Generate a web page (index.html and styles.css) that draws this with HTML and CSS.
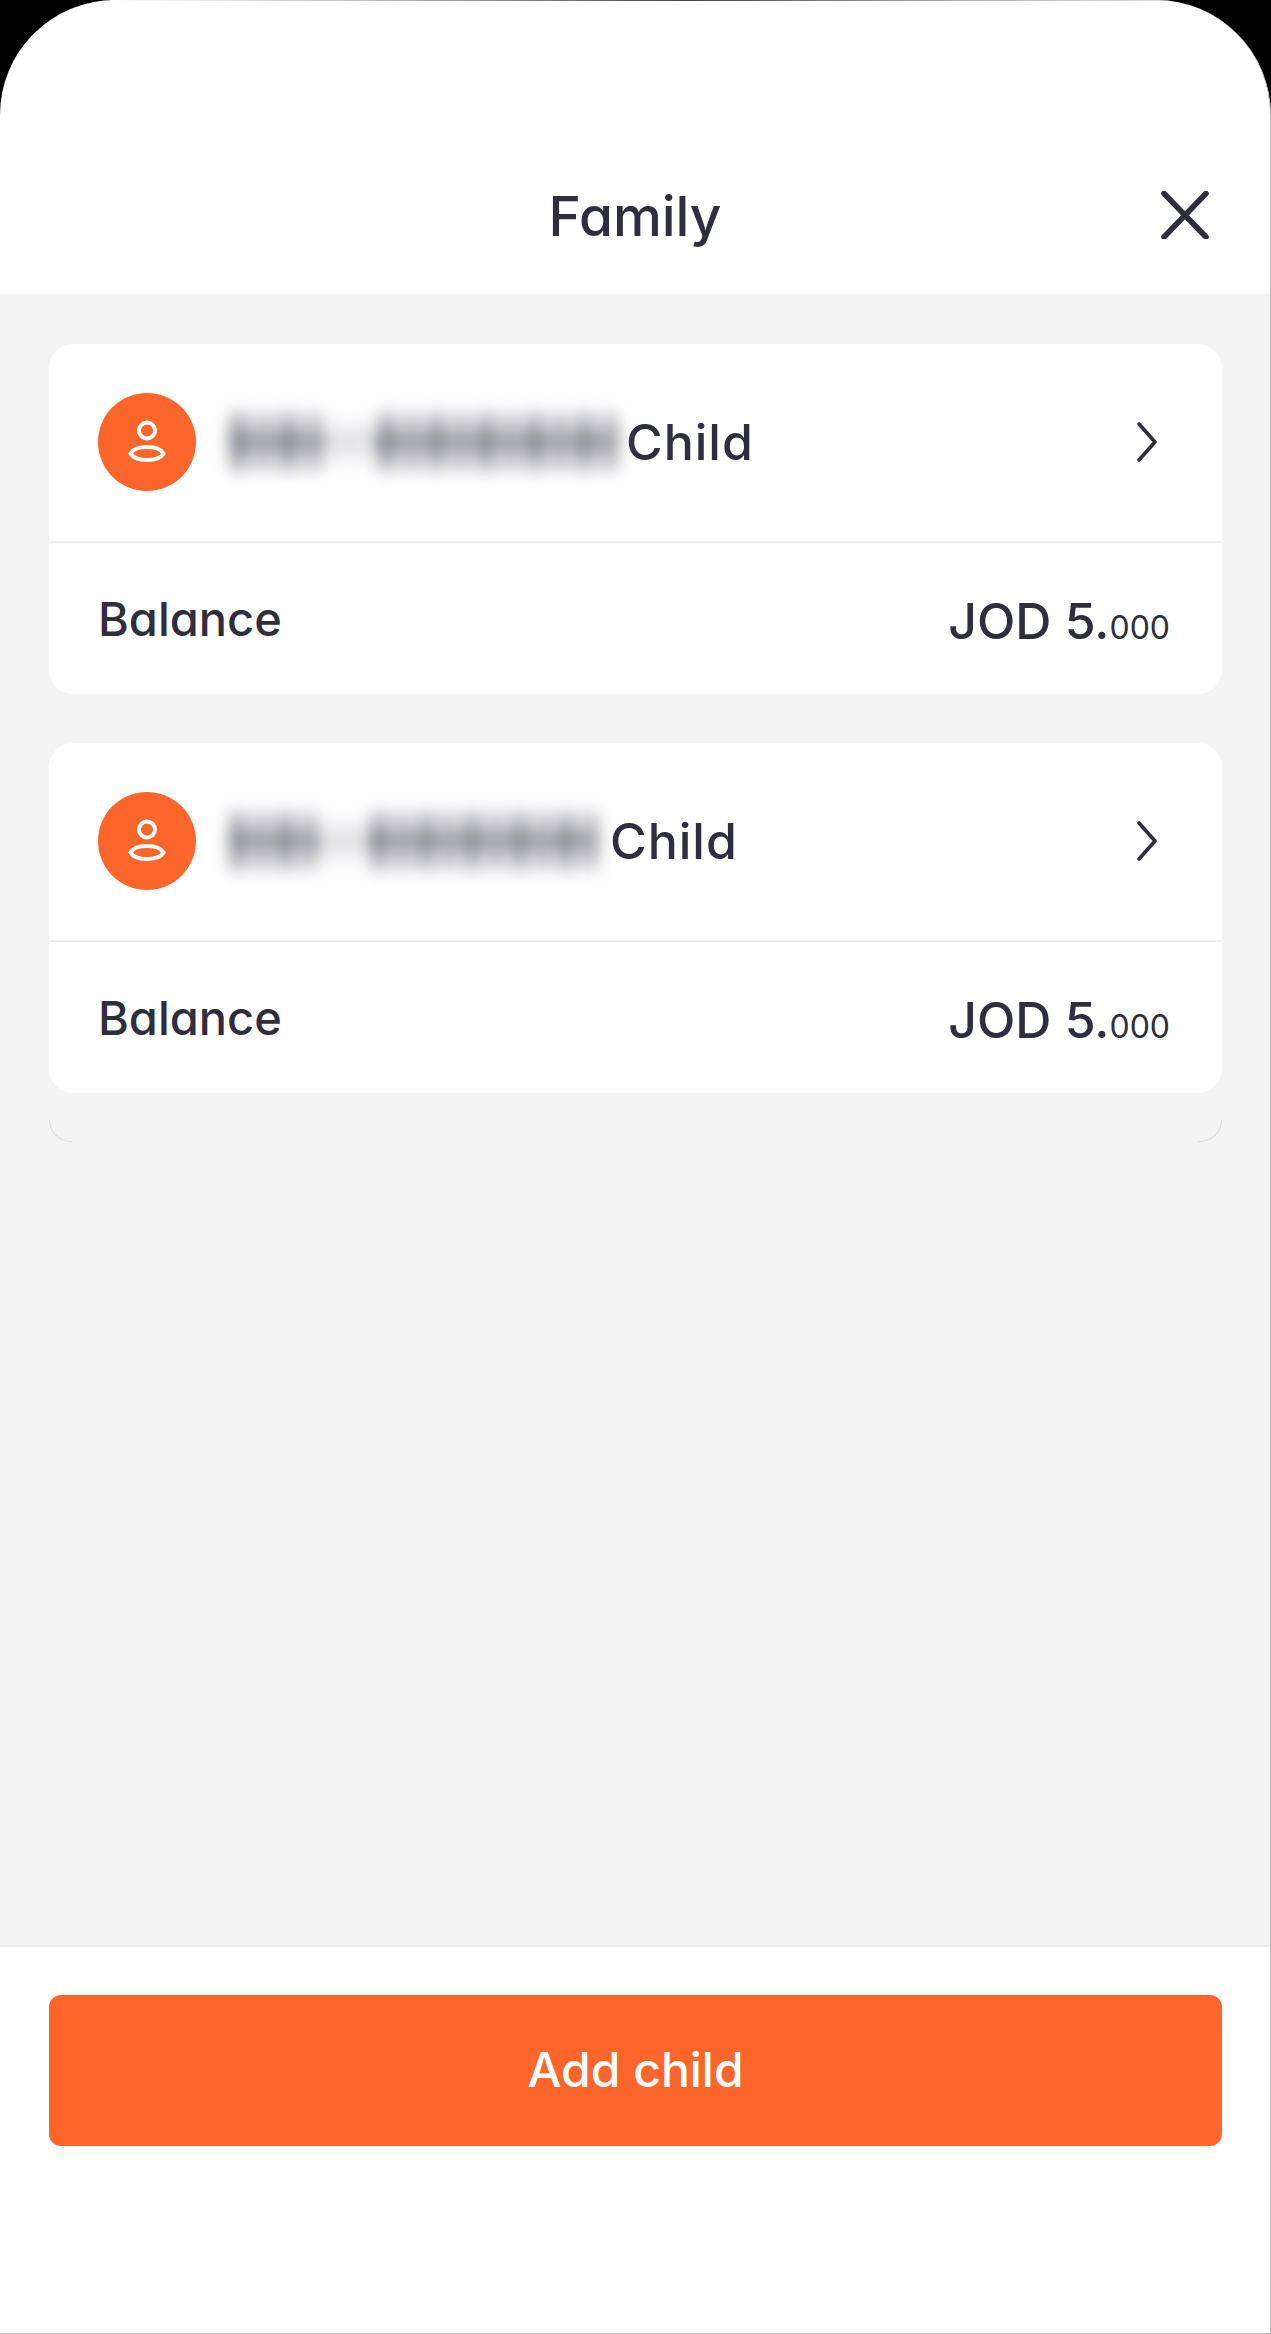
FILE: index.html
```html
<!DOCTYPE html>
<html lang="en">
<head>
    <meta charset="UTF-8">
    <meta name="viewport" content="width=device-width, initial-scale=1.0">
    <title>Family</title>
    <link rel="stylesheet" href="styles.css">
</head>
<body>
    <div class="screen">
        <header class="top-bar">
            <h1>Family</h1>
            <button class="close-btn" type="button" aria-label="Close">
                <svg width="48" height="48" viewBox="0 0 48 48" fill="none" stroke="#2e2e3d" stroke-width="5.6" stroke-linecap="round"><path d="M3 2.500 45 46M45 2.500 3 46"/></svg>
            </button>
        </header>

        <main class="family-list">
            <section class="card">
                <div class="card-top">
                    <span class="avatar">
                        <svg width="40" height="46" viewBox="0 0 40 46" fill="none" stroke="#fff" stroke-width="4"><circle cx="20" cy="11.500" r="8"/><path d="M3.500 34.500C6 30 13 28 20 28s14 2 16.500 6.500C34 39 27 41 20 41S6 39 3.500 34.500Z"/></svg>
                    </span>
                    <span class="blur-name blur-one"><i></i><i></i><i></i><i></i><i></i><i></i><i></i><i></i><i></i><i></i><i></i><i></i><i></i><i></i><i></i><i></i></span>
                    <span class="child-label">Child</span>
                    <svg class="chevron" width="22" height="40" viewBox="0 0 22 40" fill="none" stroke="#2e2e3d" stroke-width="3.600" stroke-linecap="round" stroke-linejoin="round"><path d="M3 2 19 20 3 38"/></svg>
                </div>
                <div class="card-bottom">
                    <span class="balance-label">Balance</span>
                    <span class="amount">JOD 5.<small>000</small></span>
                </div>
            </section>

            <section class="card">
                <div class="card-top">
                    <span class="avatar">
                        <svg width="40" height="46" viewBox="0 0 40 46" fill="none" stroke="#fff" stroke-width="4"><circle cx="20" cy="11.500" r="8"/><path d="M3.500 34.500C6 30 13 28 20 28s14 2 16.500 6.500C34 39 27 41 20 41S6 39 3.500 34.500Z"/></svg>
                    </span>
                    <span class="blur-name blur-two"><i></i><i></i><i></i><i></i><i></i><i></i><i></i><i></i><i></i><i></i><i></i><i></i><i></i><i></i><i></i><i></i></span>
                    <span class="child-label">Child</span>
                    <svg class="chevron" width="22" height="40" viewBox="0 0 22 40" fill="none" stroke="#2e2e3d" stroke-width="3.600" stroke-linecap="round" stroke-linejoin="round"><path d="M3 2 19 20 3 38"/></svg>
                </div>
                <div class="card-bottom">
                    <span class="balance-label">Balance</span>
                    <span class="amount">JOD 5.<small>000</small></span>
                </div>
            </section>

            <div class="card-edge"><span></span><span></span></div>
        </main>

        <footer class="bottom-bar">
            <button class="add-btn" type="button">Add child</button>
        </footer>
    </div>
</body>
</html>
```

FILE: styles.css
```css
* {
    box-sizing: border-box;
    margin: 0;
    padding: 0;
}

body {
    font-family: 'Inter', 'Lato', sans-serif;
    font-feature-settings: "cv11";
    background: #000;
    color: #2e2e3d;
    width: 1271px;
    height: 2334px;
    overflow: hidden;
}

.screen {
    position: relative;
    display: flex;
    flex-direction: column;
    height: 100%;
    background: #fff;
    border-radius: 115px 115px 0 0;
    border-right: 1px solid #bdbdbd;
    border-bottom: 1px solid #bdbdbd;
    overflow: hidden;
}

/* thin grey line along the top edge */
.screen::before {
    content: "";
    position: absolute;
    top: 0;
    left: 110px;
    right: 110px;
    height: 1px;
    background: linear-gradient(90deg, #fff, #bbb 25%, #444 55%, #aaa 80%, #ddd);
}

.top-bar {
    display: flex;
    justify-content: center;
    align-items: flex-end;
    position: relative;
    height: 294px;
    padding-bottom: 46px;
    flex-shrink: 0;
}

.top-bar h1 {
    font-size: 55px;
    font-weight: 550;
    line-height: 64px;
}

.close-btn {
    position: absolute;
    right: 61px;
    top: 191px;
    display: flex;
    background: none;
    border: none;
}

.family-list {
    flex: 1;
    display: flex;
    flex-direction: column;
    gap: 49px;
    padding: 50px 48px 0 49px;
    background: #f4f4f4;
}

.card {
    background: #fff;
    border-radius: 24px;
}

.card-top {
    display: flex;
    align-items: center;
    height: 199px;
    padding: 0 64px 2px 49px;
    border-bottom: 2px solid #ececec;
}

.avatar {
    display: flex;
    justify-content: center;
    align-items: center;
    width: 98px;
    height: 98px;
    border-radius: 50%;
    background: #fd662a;
    flex-shrink: 0;
}

/* redacted name: soft vertical bars for the letters, a band through the middle */
.blur-name {
    display: flex;
    align-items: center;
    gap: 5px;
    height: 58px;
    margin-left: 33px;
    background: linear-gradient(transparent 40%, #82828d 46%, #82828d 54%, transparent 60%);
    filter: blur(8px);
}

.blur-name i {
    flex: 1;
    height: 62px;
    background: linear-gradient(#d4d4d9, #7f7f8a 50%, #d4d4d9);
}

.blur-name i:nth-child(2n) {
    background: linear-gradient(#e0e0e4, #9797a0 50%, #e0e0e4);
}

/* gap between the two blurred words */
.blur-name i:nth-child(6),
.blur-name i:nth-child(5) {
    height: 44px;
    background: #ececef;
}

.blur-one {
    width: 390px;
}

.blur-two {
    width: 370px;
}

.child-label {
    font-size: 50px;
    font-weight: 500;
    letter-spacing: 1px;
    line-height: 56px;
    margin-left: 7px;
}

.blur-two + .child-label {
    margin-left: 11px;
}

.chevron {
    margin-left: auto;
}

.card-bottom {
    display: flex;
    justify-content: space-between;
    align-items: center;
    height: 151px;
    padding: 0 52px 0 49px;
}

.balance-label {
    font-size: 47px;
    font-weight: 550;
    line-height: 56px;
}

.amount {
    font-size: 50px;
    font-weight: 550;
    line-height: 60px;
    margin-top: 12px;
}

.amount small {
    font-size: 32px;
    font-weight: 400;
}

.card-edge {
    display: flex;
    justify-content: space-between;
    margin-top: -22px;
}

.card-edge span {
    width: 24px;
    height: 22px;
    border: 1px solid transparent;
    border-bottom-color: #dadada;
}

.card-edge span:first-child {
    border-left-color: #dadada;
    border-bottom-left-radius: 24px;
}

.card-edge span:last-child {
    border-right-color: #dadada;
    border-bottom-right-radius: 24px;
}

.bottom-bar {
    height: 388px;
    padding: 48px 48px 0 49px;
    border-top: 2px solid #ececec;
    flex-shrink: 0;
}

.add-btn {
    display: block;
    width: 100%;
    height: 151px;
    background: #fd662a;
    color: #fff;
    border: none;
    border-radius: 12px;
    font-family: inherit;
    font-feature-settings: inherit;
    font-size: 48px;
    font-weight: 550;
    padding-bottom: 2px;
}
```
